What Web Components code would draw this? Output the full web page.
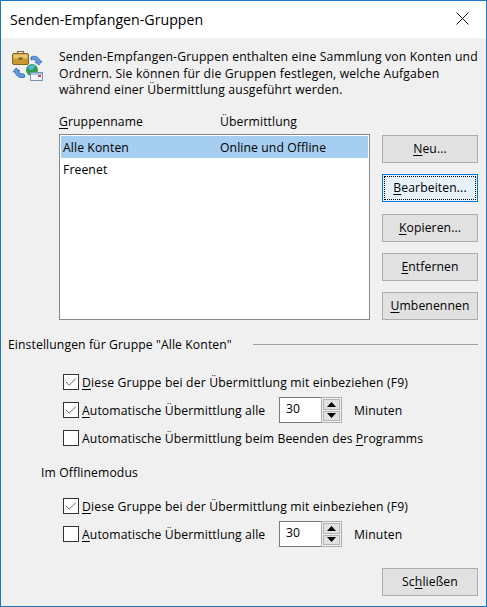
<!DOCTYPE html>
<html lang="de">
<head>
<meta charset="utf-8">
<title>Senden-Empfangen-Gruppen</title>
<style>
  html, body { margin: 0; padding: 0; height: 100%; background: #f0f0f0; }
  body { font: 12.2px/17px "Open Sans", "Noto Sans", sans-serif; color: #000; letter-spacing: .1px; }
  u { text-underline-offset: 2px; text-decoration-thickness: 1px; }
  .wide { letter-spacing: .16px; }
</style>
</head>
<body>

<dlg-window heading="Senden-Empfangen-Gruppen">
  <dlg-intro>Senden-Empfangen-Gruppen enthalten eine Sammlung von Konten und<br>Ordnern. Sie können für die Gruppen festlegen, welche Aufgaben<br>während einer Übermittlung ausgeführt werden.</dlg-intro>

  <dlg-groups>
    <dlg-button slot="buttons"><u>N</u>eu...</dlg-button>
    <dlg-button slot="buttons" focused><u>B</u>earbeiten...</dlg-button>
    <dlg-button slot="buttons"><u>K</u>opieren...</dlg-button>
    <dlg-button slot="buttons"><u>E</u>ntfernen</dlg-button>
    <dlg-button slot="buttons"><u>U</u>mbenennen</dlg-button>
  </dlg-groups>

  <dlg-section heading='Einstellungen für Gruppe "Alle Konten"'>
    <dlg-check checked><span class="wide"><u>D</u>iese Gruppe bei der Übermittlung mit einbeziehen (F9)</span></dlg-check>
    <dlg-check checked spin="30"><u>A</u>utomatische Übermittlung alle</dlg-check>
    <dlg-check>Automatische Übermittlung beim Beenden des <u>P</u>rogramms</dlg-check>
  </dlg-section>

  <dlg-offline heading="Im Offlinemodus">
    <dlg-check checked><span class="wide"><u>D</u>iese Gruppe bei der Übermittlung mit einbeziehen (F9)</span></dlg-check>
    <dlg-check spin="30"><u>A</u>utomatische Übermittlung alle</dlg-check>
  </dlg-offline>

  <dlg-footer>
    <dlg-button>Sc<u>h</u>ließen</dlg-button>
  </dlg-footer>
</dlg-window>

<script>
class DlgWindow extends HTMLElement {
  connectedCallback() {
    this.attachShadow({ mode: 'open' }).innerHTML = `
      <style>
        :host { display: flex; flex-direction: column; box-sizing: border-box; width: 487px; height: 607px;
                border: 1px solid #1a78c8; background: #f0f0f0; }
        .bar { display: flex; align-items: center; justify-content: space-between; height: 37px; background: #fff; flex: none; }
        .title { font-size: 14.2px; letter-spacing: 0; padding-left: 9px; margin-top: -1px; }
        .close { display: flex; width: 46px; height: 37px; align-items: center; justify-content: center; margin-top: -2px; margin-right: 1px; }
        .body { display: flex; flex-direction: column; flex: 1; }
      </style>
      <div class="bar">
        <div class="title">${this.getAttribute('heading')}</div>
        <div class="close"><svg width="13" height="13" viewBox="0 0 13 13"><path d="M.5.5l12 12M12.5.5l-12 12" stroke="#111" fill="none"/></svg></div>
      </div>
      <div class="body"><slot></slot></div>`;
  }
}

class DlgIntro extends HTMLElement {
  connectedCallback() {
    this.attachShadow({ mode: 'open' }).innerHTML = `
      <style>
        :host { display: flex; padding: 11px 0 0 10px; }
        svg { flex: none; margin-right: 14px; margin-top: 0; }
        .text { line-height: 16.7px; letter-spacing: .16px; white-space: nowrap; }
      </style>
      <svg width="34" height="34" viewBox="0 0 34 34">
        <rect x="1.5" y="4.5" width="16" height="11" rx="1.5" fill="#c9982f" stroke="#7d6428"/>
        <rect x="2.5" y="5.5" width="14" height="4" fill="#e8c76c"/>
        <path d="M6.5 4.5V2.5h6v2" fill="none" stroke="#7d6428" stroke-width="1.2"/>
        <rect x="7.5" y="8.5" width="4" height="2" fill="#6b5526"/>
        <path d="M20 8c4-2 8 0 9 4h2l-3 4-4-3h2c-1-2-3-3-6-2z" fill="#5e9ce2" stroke="#2a5ca6" stroke-width=".7"/>
        <path d="M14 28c-5 2-9-1-10-5H2l3-4 4 3H7c1 2 3 3 6 3z" fill="#5e9ce2" stroke="#2a5ca6" stroke-width=".7"/>
        <circle cx="21" cy="21" r="6" fill="#2f9e4f"/>
        <path d="M17 18c2-2 5-3 7-1l-2 3-3 1z" fill="#59b7ea"/>
        <rect x="19.5" y="23.5" width="12" height="8" fill="#f3f5fa" stroke="#7c93b6"/>
        <path d="M20 24h11v2H20z" fill="#a9c4e8"/>
        <rect x="27" y="26" width="3" height="2" fill="#d8483f"/>
      </svg>
      <div class="text"><slot></slot></div>`;
  }
}

class DlgButton extends HTMLElement {
  connectedCallback() {
    this.attachShadow({ mode: 'open' }).innerHTML = `
      <style>
        :host { display: flex; box-sizing: border-box; align-items: center; justify-content: center; position: relative;
                width: 96px; height: 28px; background: #e1e1e1; border: 1px solid #adadad; padding-bottom: 1px; }
        :host([focused]) { background: #e5f1fb; border-color: #0078d7; }
        :host([focused])::after { content: ""; position: absolute; inset: 1px; border: 1px dotted #000; }
      </style>
      <slot></slot>`;
  }
}

class DlgGroups extends HTMLElement {
  connectedCallback() {
    this.attachShadow({ mode: 'open' }).innerHTML = `
      <style>
        :host { display: grid; grid-template-columns: 311px 96px; column-gap: 12px; margin: 0 0 0 58px; height: 231px; padding-top: 0; }
        .left { display: flex; flex-direction: column; }
        .head { display: grid; grid-template-columns: 161px 1fr; height: 21px; padding-top: 14px; line-height: 17px; box-sizing: content-box; }
        .list { box-sizing: border-box; height: 186px; background: #fff; border: 1px solid #828790; padding: 1px; }
        .row { display: grid; grid-template-columns: 157px 1fr; align-items: center; height: 22px; padding: 0 2px 0 2px; }
        .sel { background: #a6cef0; }
        u { text-underline-offset: 2px; text-decoration-thickness: 1px; }
        .buttons { display: flex; flex-direction: column; gap: 11.25px; padding-top: 36px; }
      </style>
      <div class="left">
        <div class="head"><span><u>G</u>ruppenname</span><span>Übermittlung</span></div>
        <div class="list">
          <div class="row sel"><span>Alle Konten</span><span>Online und Offline</span></div>
          <div class="row"><span>Freenet</span></div>
        </div>
      </div>
      <div class="buttons"><slot name="buttons"></slot></div>`;
  }
}

class DlgSection extends HTMLElement {
  connectedCallback() {
    this.attachShadow({ mode: 'open' }).innerHTML = `
      <style>
        :host { display: block; padding: 0 8px 0 7px; margin-top: 6px; }
        .head { display: flex; align-items: center; height: 17px; }
        .line { flex: 1; height: 1px; background: #a0a0a0; margin-left: 21px; }
        .items { display: flex; flex-direction: column; gap: 8px; padding: 19px 0 0 55px; }
      </style>
      <div class="head"><span>${this.getAttribute('heading')}</span><span class="line"></span></div>
      <div class="items"><slot></slot></div>`;
  }
}

class DlgOffline extends HTMLElement {
  connectedCallback() {
    this.attachShadow({ mode: 'open' }).innerHTML = `
      <style>
        :host { display: block; padding: 16px 8px 0 40px; }
        .head { height: 17px; }
        .items { display: flex; flex-direction: column; gap: 8px; padding: 15px 0 0 22px; }
      </style>
      <div class="head">${this.getAttribute('heading')}</div>
      <div class="items"><slot></slot></div>`;
  }
}

class DlgCheck extends HTMLElement {
  connectedCallback() {
    const spin = this.getAttribute('spin');
    const mark = this.hasAttribute('checked')
      ? '<svg width="16" height="16" viewBox="0 0 16 16"><path d="M3 8l3.2 3.2L12.8 4.6" fill="none" stroke="#666" stroke-width="1"/></svg>'
      : '';
    const spinner = spin ? `
      <span class="spin">
        <span class="value">${spin}</span>
        <span class="arrows">
          <span class="arr"><svg width="9" height="5" viewBox="0 0 9 5"><path d="M4.5 0L9 5H0z" fill="#000"/></svg></span>
          <span class="arr"><svg width="9" height="5" viewBox="0 0 9 5"><path d="M0 0h9L4.5 5z" fill="#000"/></svg></span>
        </span>
      </span>
      <span class="unit">Minuten</span>` : '';
    this.attachShadow({ mode: 'open' }).innerHTML = `
      <style>
        :host { display: flex; align-items: center; height: 20px; }
        .box { flex: none; box-sizing: border-box; width: 16px; height: 16px; border: 1px solid #333; background: #fff; margin-right: 3px; }
        .box svg { display: block; margin: -1px; }
        .label { width: 197px; white-space: nowrap; }
        :host(:not([spin])) .label { width: auto; }
        .spin { display: flex; box-sizing: border-box; width: 63px; height: 26px; margin: -3px 0; }
        .value { flex: 1; box-sizing: border-box; background: #fff; border: 1px solid #7a7a7a; border-right: 0; padding: 2px 0 0 6px; }
        .arrows { display: flex; flex-direction: column; box-sizing: border-box; width: 21px; border: 1px solid #adadad; background: #f0f0f0; padding: 1px; gap: 1px; }
        .arr { flex: 1; display: flex; align-items: center; justify-content: center; background: #e1e1e1; border: 1px solid #b5b5b5; }
        .unit { margin-left: 12px; }
      </style>
      <span class="box">${mark}</span>
      <span class="label"><slot></slot></span>${spinner}`;
  }
}

class DlgFooter extends HTMLElement {
  connectedCallback() {
    this.attachShadow({ mode: 'open' }).innerHTML = `
      <style>
        :host { display: flex; justify-content: flex-end; margin-top: auto; padding: 0 8px 10px 0; }
      </style>
      <slot></slot>`;
  }
}

customElements.define('dlg-window', DlgWindow);
customElements.define('dlg-intro', DlgIntro);
customElements.define('dlg-button', DlgButton);
customElements.define('dlg-groups', DlgGroups);
customElements.define('dlg-section', DlgSection);
customElements.define('dlg-offline', DlgOffline);
customElements.define('dlg-check', DlgCheck);
customElements.define('dlg-footer', DlgFooter);
</script>
</body>
</html>
